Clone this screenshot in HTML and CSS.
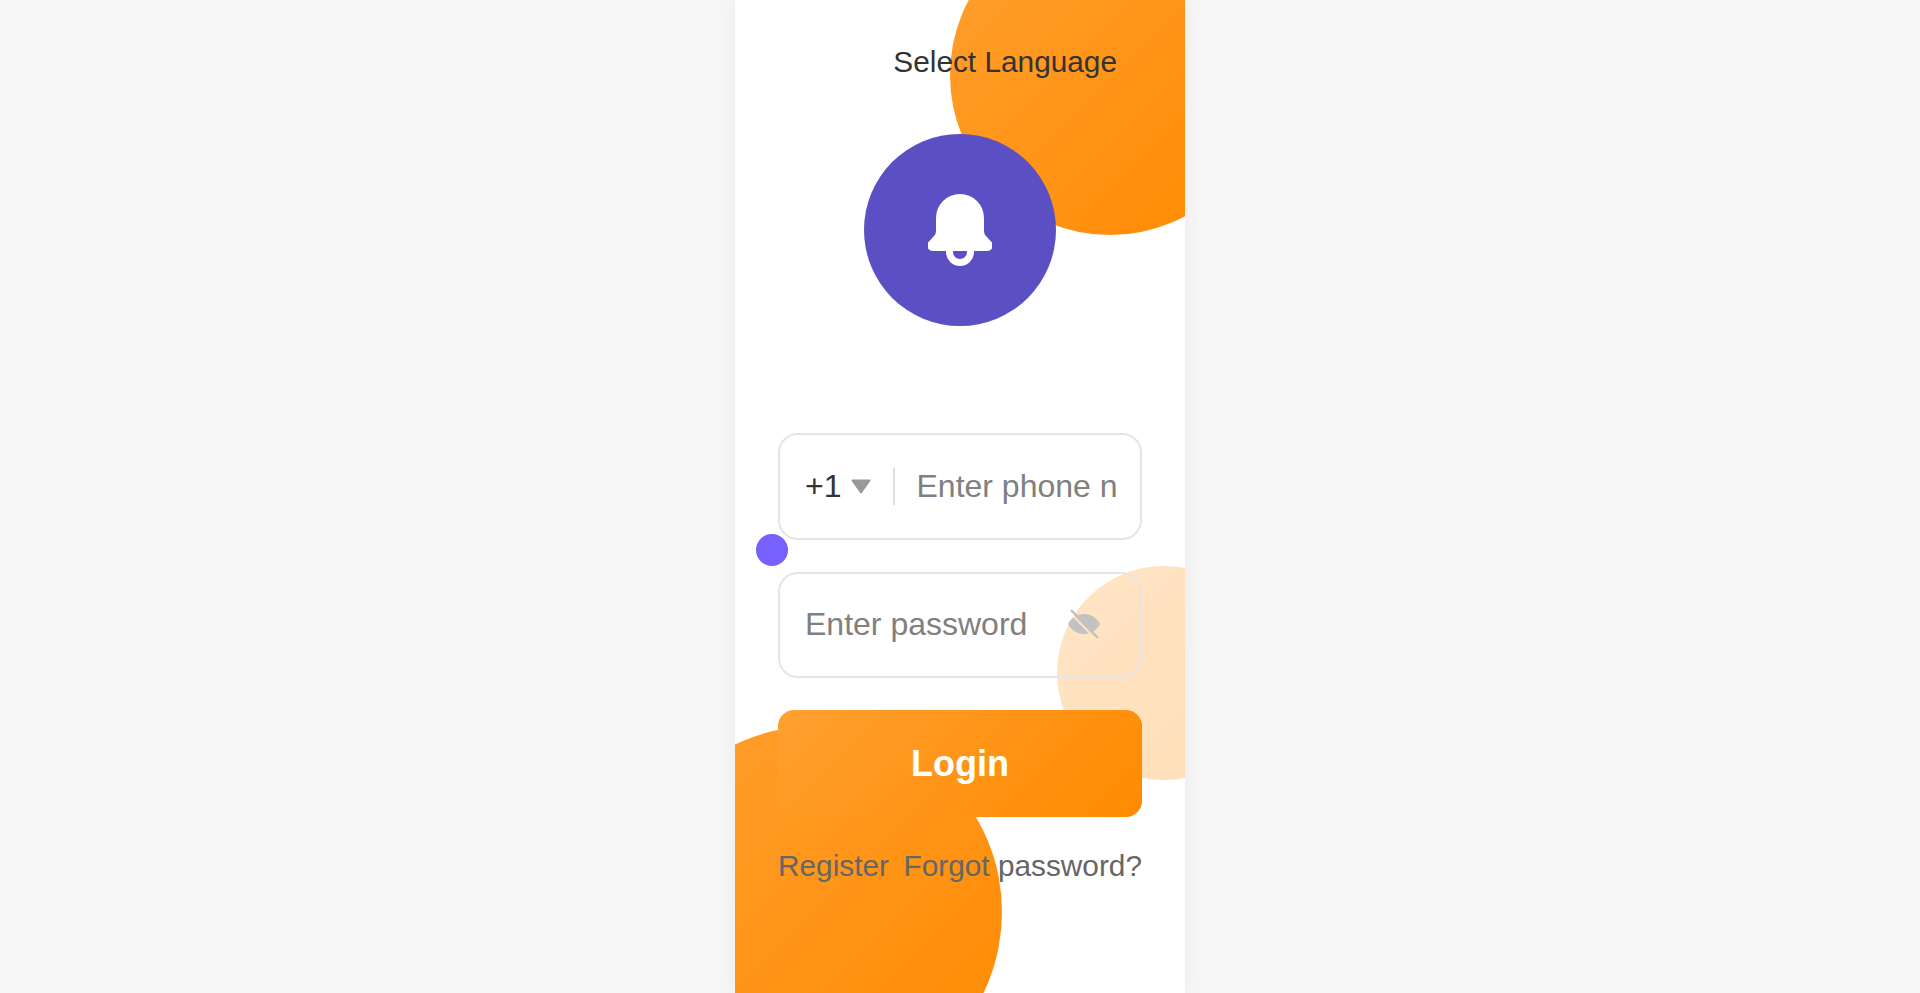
FILE: index.html
```html
<!DOCTYPE html>
<html lang="en">
<head>
    <meta charset="UTF-8">
    <meta name="viewport" content="width=device-width, initial-scale=1.0">
    <title>Login</title>
    <link rel="stylesheet" href="styles.css">
</head>
<body>
    <div class="login-page">
        <div class="circle circle-top"></div>
        <div class="circle circle-bottom"></div>
        <div class="circle circle-light"></div>
        <div class="circle dot"></div>

        <div class="lang-row">
            <span class="lang-select">Select Language</span>
        </div>

        <div class="logo">
            <svg class="logo-icon" viewBox="0 0 64 72" aria-hidden="true">
                <circle cx="32" cy="58" r="10.5" fill="none" stroke="#fff" stroke-width="7"/>
                <path fill="#fff" d="M8 24a24 24 0 0 1 48 0v13q0 3 2 5l4.500 5a5.500 5.500 0 0 1-3.500 10H5a5.500 5.500 0 0 1-3.500-10L6 42q2-2 2-5z"/>
            </svg>
        </div>

        <form class="login-form">
            <div class="field">
                <div class="country-code">
                    <span>+1</span>
                    <svg class="caret" viewBox="0 0 20 15" aria-hidden="true">
                        <path fill="#999" stroke="#999" stroke-width="2" stroke-linejoin="round" d="M1.500 1.500h17L10 13.500z"/>
                    </svg>
                </div>
                <input class="field-input" type="text" placeholder="Enter phone number">
            </div>
            <div class="field field-password">
                <input class="field-input password-input" type="password" placeholder="Enter password">
                <svg class="eye-icon" viewBox="0 0 32 30" aria-hidden="true">
                    <mask id="eye-gap">
                        <rect width="32" height="30" fill="#fff"/>
                        <path stroke="#000" stroke-width="2" d="M1.500 3l27 28"/>
                    </mask>
                    <path fill="#c2c2c2" mask="url(#eye-gap)" d="M16 5c7 0 13 4 16 10-3 6-9 10-16 10S3 21 0 15C3 9 9 5 16 5z"/>
                    <path stroke="#c2c2c2" stroke-width="2.500" d="M3 1l27 28"/>
                </svg>
            </div>
            <button class="login-btn" type="button">Login</button>
        </form>

        <div class="links">
            <a href="#">Register</a>
            <a href="#">Forgot password?</a>
        </div>
    </div>
</body>
</html>
```

FILE: styles.css
```css
* {
    box-sizing: border-box;
}

body {
    margin: 0;
    height: 993px;
    overflow: hidden;
    display: flex;
    justify-content: center;
    background-color: #f6f6f6;
    font-family: "Liberation Sans", Arial, sans-serif;
}

.login-page {
    position: relative;
    width: 450px;
    height: 993px;
    padding: 0 43px;
    overflow: hidden;
    background-color: #fff;
    box-shadow: 0 0 20px rgba(0, 0, 0, 0.05);
}

.circle {
    position: absolute;
    border-radius: 50%;
}

.circle-top {
    left: 215px;
    top: -85px;
    width: 320px;
    height: 320px;
    background: linear-gradient(135deg, #ffa030, #ff8a00);
}

.circle-bottom {
    left: -105px;
    top: 726px;
    width: 372px;
    height: 372px;
    background: linear-gradient(135deg, #ffa030, #ff8a00);
}

.circle-light {
    left: 322px;
    top: 566px;
    width: 214px;
    height: 214px;
    background: linear-gradient(135deg, #ffa030, #ff8a00);
    opacity: 0.28;
}

.dot {
    left: 21px;
    top: 534px;
    width: 32px;
    height: 32px;
    background-color: #7660ff;
}

.lang-row {
    position: relative;
    display: flex;
    justify-content: flex-end;
    padding: 45px 25px 0 0;
}

.lang-select {
    font-size: 29.8px;
    line-height: 34px;
    color: #333;
}

.logo {
    position: relative;
    width: 192px;
    height: 192px;
    margin: 55px auto 0;
    display: flex;
    align-items: center;
    justify-content: center;
    border-radius: 50%;
    background-color: #5b4fc4;
}

.logo-icon {
    width: 64px;
    height: 72px;
}

.login-form {
    position: relative;
    margin-top: 107px;
    display: flex;
    flex-direction: column;
    gap: 32.5px;
}

.field {
    height: 106.5px;
    padding: 0 24px 0 25px;
    display: flex;
    align-items: center;
    border: 2px solid #e5e5e5;
    border-radius: 20px;
}

.field-password {
    height: 105.5px;
}

.country-code {
    height: 37px;
    padding-right: 22px;
    margin-right: 21px;
    display: flex;
    align-items: center;
    gap: 10px;
    border-right: 2px solid #ddd;
    font-size: 32px;
    color: #333;
}

.caret {
    width: 20px;
    height: 15px;
}

.field-input {
    flex: 1;
    min-width: 0;
    padding: 0;
    border: none;
    outline: none;
    background: transparent;
    font-family: inherit;
    font-size: 32px;
    color: #333;
}

.field-input::placeholder {
    color: #808080;
    opacity: 1;
}

.password-input {
    margin-right: 14px;
}

.eye-icon {
    width: 32px;
    height: 30px;
    margin: 0 16px 2px 0;
}

.login-btn {
    height: 107px;
    border: none;
    border-radius: 16px;
    background: linear-gradient(135deg, #ffa030, #ff8a00);
    font-family: inherit;
    font-size: 36px;
    font-weight: bold;
    color: #fff;
}

.links {
    position: relative;
    margin-top: 32px;
    display: flex;
    justify-content: space-between;
    font-size: 29.8px;
    line-height: 34px;
}

.links a {
    color: #666;
    text-decoration: none;
}
```
